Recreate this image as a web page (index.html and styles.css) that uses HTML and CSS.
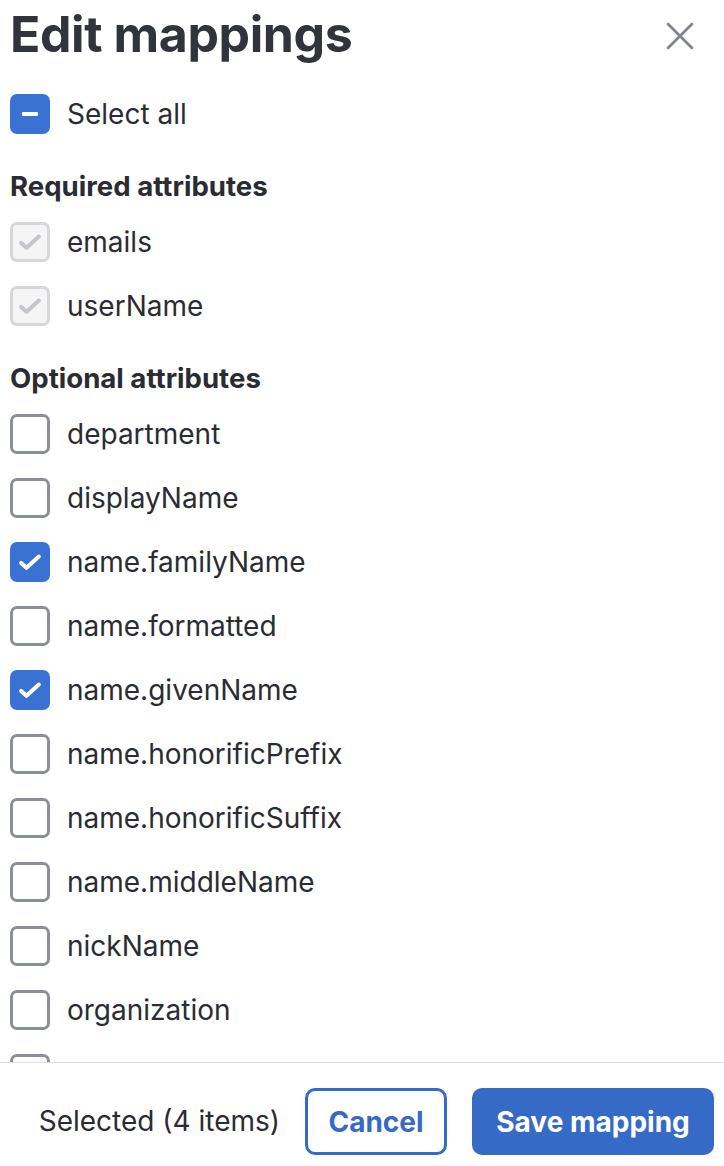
FILE: index.html
```html
<!DOCTYPE html>
<html>
<head>
<meta charset="utf-8">
<link rel="stylesheet" href="styles.css">
</head>
<body>
<div class="dialog">
  <div class="header">
    <h1 class="title">Edit mappings</h1>
    <button class="close" aria-label="Close">
      <svg width="28" height="28" viewBox="0 0 28 28"><path d="M2 2 L26 26 M26 2 L2 26" stroke="#7d828b" stroke-width="2.6" stroke-linecap="round" fill="none"/></svg>
    </button>
  </div>
  <div class="body">
    <div class="row"><span class="cb cb-on"><span class="minus"></span></span><span class="label">Select all</span></div>
    <div class="section">Required attributes</div>
    <div class="row"><span class="cb cb-dis"><svg class="tick" viewBox="0 0 24 24"><path d="M4.4 12.8 L9 17 L19.6 7.3" /></svg></span><span class="label">emails</span></div>
    <div class="row"><span class="cb cb-dis"><svg class="tick" viewBox="0 0 24 24"><path d="M4.4 12.8 L9 17 L19.6 7.3" /></svg></span><span class="label">userName</span></div>
    <div class="section">Optional attributes</div>
    <div class="row"><span class="cb"></span><span class="label">department</span></div>
    <div class="row"><span class="cb"></span><span class="label">displayName</span></div>
    <div class="row"><span class="cb cb-on"><svg class="tick" viewBox="0 0 24 24"><path d="M4.4 12.8 L9 17 L19.6 7.3" /></svg></span><span class="label">name.familyName</span></div>
    <div class="row"><span class="cb"></span><span class="label">name.formatted</span></div>
    <div class="row"><span class="cb cb-on"><svg class="tick" viewBox="0 0 24 24"><path d="M4.4 12.8 L9 17 L19.6 7.3" /></svg></span><span class="label">name.givenName</span></div>
    <div class="row"><span class="cb"></span><span class="label">name.honorificPrefix</span></div>
    <div class="row"><span class="cb"></span><span class="label">name.honorificSuffix</span></div>
    <div class="row"><span class="cb"></span><span class="label">name.middleName</span></div>
    <div class="row"><span class="cb"></span><span class="label">nickName</span></div>
    <div class="row"><span class="cb"></span><span class="label">organization</span></div>
    <div class="row"><span class="cb"></span></div>
  </div>
  <div class="footer">
    <span class="count">Selected (4 items)</span>
    <button class="btn btn-outline">Cancel</button>
    <button class="btn btn-primary">Save mapping</button>
  </div>
</div>
</body>
</html>
```

FILE: styles.css
```css
* { box-sizing: border-box; }
html, body { margin: 0; padding: 0; background: #fff; }
body {
  font-family: Inter, "Liberation Sans", sans-serif;
  color: #2a2c33;
}
.dialog {
  height: 1166px;
  display: flex;
  flex-direction: column;
  overflow: hidden;
}
.header {
  display: flex;
  align-items: center;
  justify-content: space-between;
  height: 68px;
  margin-bottom: 14px;
  padding: 0 30px 0 10px;
}
.title {
  margin: 0;
  font-size: 50px;
  font-weight: 700;
  letter-spacing: -0.4px;
  line-height: 68px;
  color: #32343b;
}
.close {
  border: 0;
  background: none;
  padding: 0;
  width: 28px;
  height: 28px;
  margin-top: 4px;
  display: flex;
}
.body {
  flex: 1;
  overflow: hidden;
  padding: 0 10px;
}
.row {
  height: 64px;
  display: flex;
  align-items: center;
  gap: 17px;
}
.label {
  font-size: 28px;
  line-height: 32px;
}
.section {
  height: 64px;
  padding-top: 24px;
  font-size: 27.6px;
  line-height: 32px;
  font-weight: 700;
  color: #2a2c33;
}
.cb {
  width: 40px;
  height: 40px;
  flex: none;
  border: 3px solid #8b9098;
  border-radius: 7px;
  background: #fff;
  display: flex;
  align-items: center;
  justify-content: center;
}
.cb-on {
  background: #3a72d3;
  border-color: #3a72d3;
}
.cb-dis {
  background: #f5f5f6;
  border-color: #d5d7db;
}
.tick {
  width: 28px;
  height: 28px;
  fill: none;
  stroke: #fff;
  stroke-width: 3.4;
  stroke-linecap: round;
  stroke-linejoin: round;
}
.cb-dis .tick { stroke: #c3c6cc; }
.minus {
  width: 16px;
  height: 4px;
  border-radius: 1px;
  background: #fff;
}
.footer {
  flex: none;
  height: 104px;
  border-top: 1px solid #dfdfe5;
  display: flex;
  align-items: flex-start;
  justify-content: flex-end;
  gap: 25px;
  padding: 25px 10px 0 0;
}
.count {
  font-size: 28px;
  line-height: 67px;
  color: #2a2c33;
}
.btn {
  font-family: Inter, "Liberation Sans", sans-serif;
  font-size: 28px;
  font-weight: 700;
  height: 67px;
  border-radius: 10px;
  cursor: pointer;
}
.btn-outline {
  width: 142px;
  background: #fff;
  color: #366ac7;
  border: 3px solid #366ac7;
}
.btn-primary {
  width: 242px;
  background: #366ac7;
  color: #fff;
  border: 0;
}
```
